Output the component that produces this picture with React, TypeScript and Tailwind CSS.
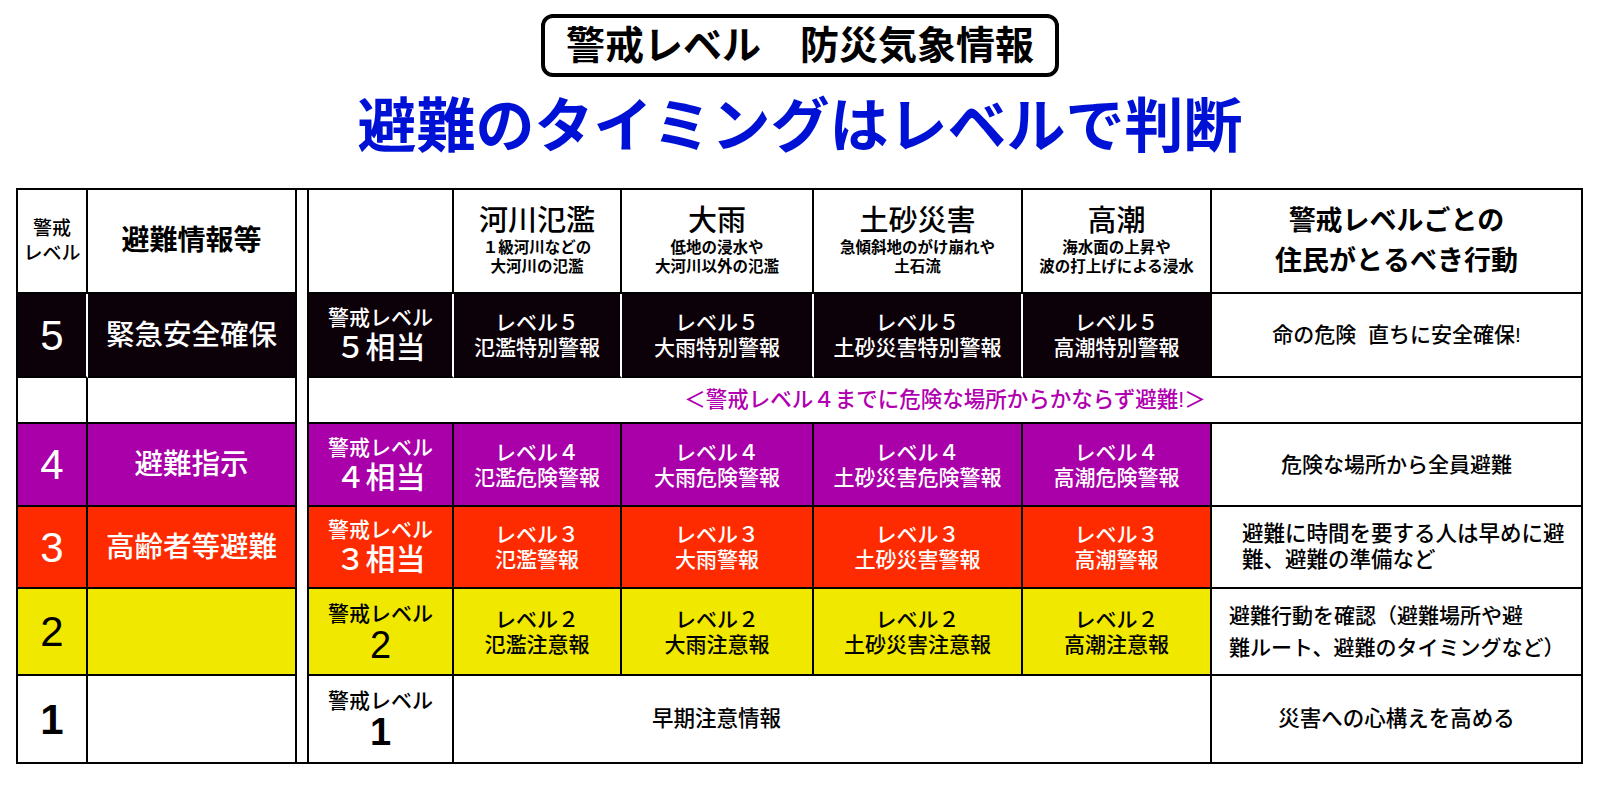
import React from 'react';
import clsx from 'clsx';

type Level = {
    lv: string;
    info: string;
    bg: string;
    fg: string;
    eqTop: string;
    eqNum: string;
    eqNumClass: string;
    label: string;
    warnings: string[];
    action: React.ReactNode;
};

const Cell: React.FC<{ className?: string; children?: React.ReactNode }> = ({ className, children }) => (
    <div className={clsx('flex flex-col items-center justify-center text-center border-b-2 border-r-2 border-black', className)}>
        {children}
    </div>
);

const hazards = [
    { title: '河川氾濫', sub: ['１級河川などの', '大河川の氾濫'] },
    { title: '大雨', sub: ['低地の浸水や', '大河川以外の氾濫'] },
    { title: '土砂災害', sub: ['急傾斜地のがけ崩れや', '土石流'] },
    { title: '高潮', sub: ['海水面の上昇や', '波の打上げによる浸水'] },
];

const levels: Level[] = [
    {
        lv: '4',
        info: '避難指示',
        bg: 'bg-[#a900a9]',
        fg: 'text-white',
        eqTop: '警戒レベル',
        eqNum: '４相当',
        eqNumClass: 'text-[30px] leading-[34px]',
        label: 'レベル４',
        warnings: ['氾濫危険警報', '大雨危険警報', '土砂災害危険警報', '高潮危険警報'],
        action: <span>危険な場所から全員避難</span>,
    },
    {
        lv: '3',
        info: '高齢者等避難',
        bg: 'bg-[#ff2b00]',
        fg: 'text-white',
        eqTop: '警戒レベル',
        eqNum: '３相当',
        eqNumClass: 'text-[30px] leading-[34px]',
        label: 'レベル３',
        warnings: ['氾濫警報', '大雨警報', '土砂災害警報', '高潮警報'],
        action: (
            <span className="block w-full pl-[30px] text-left text-[21.5px] leading-[26px]">
                避難に時間を要する人は早めに避<br />難、避難の準備など
            </span>
        ),
    },
    {
        lv: '2',
        info: '',
        bg: 'bg-[#f1e800]',
        fg: 'text-black',
        eqTop: '警戒レベル',
        eqNum: '2',
        eqNumClass: 'text-[38px] leading-[36px]',
        label: 'レベル２',
        warnings: ['氾濫注意報', '大雨注意報', '土砂災害注意報', '高潮注意報'],
        action: (
            <span className="block w-full pl-[17px] text-left leading-[32px]">
                避難行動を確認（避難場所や避<br />難ルート、避難のタイミングなど）
            </span>
        ),
    },
];

export default function App() {
    const black = 'bg-[#0c0009]';

    return (
        <div className="min-h-[792px] w-[1600px] bg-white pt-[14px] text-black [font-family:'Liberation_Sans','Noto_Sans_CJK_JP',sans-serif]">
            <div className="mx-auto flex h-[63px] w-[518px] items-center justify-center rounded-[12px] border-4 border-black text-[39px] font-bold leading-none">
                警戒レベル　防災気象情報
            </div>
            <h1 className="mt-[21px] text-center text-[59px] font-bold leading-[59px] text-[#0011d6]">
                避難のタイミングはレベルで判断
            </h1>

            <div className="ml-[16px] mt-[31px] grid w-[1567px] grid-cols-[70px_209px_12px_145px_168px_192px_209px_189px_371px] grid-rows-[104px_84px_46px_83px_82px_87px_88px] border-l-2 border-t-2 border-black">
                {/* gap between the two halves */}
                <div className="col-start-3 row-span-7 row-start-1 border-b-2 border-r-2 border-black bg-white" />

                {/* header */}
                <Cell className="text-[19px] font-medium leading-[25px]">
                    <span>警戒</span>
                    <span>レベル</span>
                </Cell>
                <Cell className="text-[28px] font-bold">避難情報等</Cell>
                <Cell />
                {hazards.map((h) => (
                    <Cell key={h.title} className="pb-[2px]">
                        <span className="text-[29px] font-medium leading-[33px]">{h.title}</span>
                        <span className="text-[15.5px] font-bold leading-[19px]">{h.sub[0]}</span>
                        <span className="text-[15.5px] font-bold leading-[19px]">{h.sub[1]}</span>
                    </Cell>
                ))}
                <Cell className="text-[27px] font-bold leading-[40px]">
                    <span>警戒レベルごとの</span>
                    <span>住民がとるべき行動</span>
                </Cell>

                {/* level 5 */}
                <Cell className={clsx(black, 'border-r-white text-[42px] text-white')}>5</Cell>
                <Cell className={clsx(black, 'text-[28.5px] font-medium text-white')}>緊急安全確保</Cell>
                <Cell className={clsx(black, 'border-r-white text-white')}>
                    <span className="text-[21px] font-medium leading-[26px]">警戒レベル</span>
                    <span className="text-[30px] font-medium leading-[34px]">５相当</span>
                </Cell>
                {['氾濫特別警報', '大雨特別警報', '土砂災害特別警報', '高潮特別警報'].map((w, i) => (
                    <Cell key={w} className={clsx(black, i < 3 ? 'border-r-white' : 'border-r-black', 'text-[21px] font-medium leading-[25px] text-white')}>
                        <span>レベル５</span>
                        <span>{w}</span>
                    </Cell>
                ))}
                <Cell className="text-[21px] font-medium">
                    <span>命の危険&nbsp;&nbsp;直ちに安全確保!</span>
                </Cell>

                {/* spacer row */}
                <Cell />
                <Cell />
                <Cell className="col-span-6 text-[21.5px] font-medium text-[#b000b0]">
                    ＜警戒レベル４までに危険な場所からかならず避難!＞
                </Cell>

                {/* levels 4 to 2 */}
                {levels.map((r) => (
                    <React.Fragment key={r.lv}>
                        <Cell className={clsx(r.bg, r.fg, 'text-[42px]')}>{r.lv}</Cell>
                        <Cell className={clsx(r.bg, r.fg, 'text-[28.5px] font-medium')}>{r.info}</Cell>
                        <Cell className={clsx(r.bg, r.fg)}>
                            <span className="text-[21px] font-medium leading-[26px]">{r.eqTop}</span>
                            <span className={clsx('font-medium', r.eqNumClass)}>{r.eqNum}</span>
                        </Cell>
                        {r.warnings.map((w) => (
                            <Cell key={w} className={clsx(r.bg, r.fg, 'text-[21px] font-medium leading-[25px]')}>
                                <span>{r.label}</span>
                                <span>{w}</span>
                            </Cell>
                        ))}
                        <Cell className="text-[21px] font-medium">{r.action}</Cell>
                    </React.Fragment>
                ))}

                {/* level 1 */}
                <Cell className="text-[42px] font-bold">1</Cell>
                <Cell />
                <Cell>
                    <span className="text-[21px] font-medium leading-[26px]">警戒レベル</span>
                    <span className="text-[38px] font-bold leading-[36px]">1</span>
                </Cell>
                <Cell className="col-span-4 items-start pl-[198px] text-[21.5px] font-medium">早期注意情報</Cell>
                <Cell className="text-[21.5px] font-medium">災害への心構えを高める</Cell>
            </div>
        </div>
    );
}
